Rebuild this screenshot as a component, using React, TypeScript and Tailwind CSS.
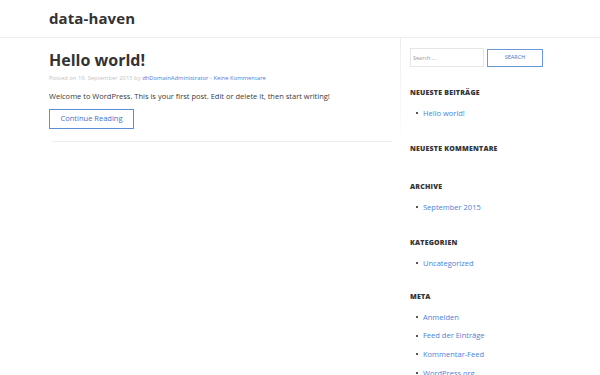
import React from "react";

const font = { fontFamily: '"Open Sans", "Liberation Sans", sans-serif' };

function Widget({ title, items, className }: { title: string; items: string[]; className: string }) {
  return (
    <section className={className}>
      <h2 className="text-[7px] leading-[10px] font-extrabold uppercase tracking-[0.2px] text-[#333]">{title}</h2>
      {items.length > 0 && (
        <ul className="mt-[5.5px]">
          {items.map((it) => (
            <li key={it} className="flex items-center leading-[18.6px] text-[7.5px]">
              <span className="ml-[6px] mr-[5px] w-[2px] h-[2px] bg-[#555]" />
              <a className="text-[#4a84d4]">{it}</a>
            </li>
          ))}
        </ul>
      )}
    </section>
  );
}

export default function App() {
  return (
    <div className="min-h-[375px] bg-white overflow-hidden" style={font}>
      {/* Header */}
      <header className="h-[38px] border-b border-[#eeeeee] flex items-center">
        <h1 className="ml-[49px] text-[15px] font-bold text-[#333] tracking-[0.1px]">data-haven</h1>
      </header>

      <div className="flex pl-[49px]">
        {/* Main */}
        <main className="w-[343px] pt-[10px]">
          <h2 className="text-[16px] leading-[24px] font-bold text-[#333]">Hello world!</h2>
          <p className="mt-[1px] text-[5.85px] leading-[10px] text-[#c4c4c4]">
            Posted on 19. September 2015 by <a className="text-[#4a84d4]">dhDomainAdministrator</a>
            <span className="text-[#4a84d4]"> - Keine Kommentare</span>
          </p>
          <p className="mt-[7px] text-[7.5px] leading-[12px] text-[#3a3a3a]">
            Welcome to WordPress. This is your first post. Edit or delete it, then start writing!
          </p>
          <button className="mt-[7px] w-[85px] h-[20px] border border-[#5d8fd6] text-[7.5px] text-[#3f74c4]">
            Continue Reading
          </button>
          <div className="mt-[12px] ml-[3px] h-px bg-[#ececec]" />
        </main>

        {/* divider */}
        <div className="ml-[8px] w-px h-[110px] bg-gradient-to-b from-[#ececec] to-transparent" />

        {/* Sidebar */}
        <aside className="pl-[9px] pt-[10px] w-[150px]">
          <form className="flex items-center gap-[3px]">
            <input
              placeholder="Search ..."
              className="w-[74px] h-[19px] border border-[#e6e6e6] px-[2px] text-[5.5px] text-[#999] placeholder:text-[#999] outline-none"
              style={font}
            />
            <button
              type="button"
              className="w-[56px] h-[18px] border border-[#6b98d8] text-[5.5px] text-[#3f74c4] uppercase"
            >
              Search
            </button>
          </form>
          <Widget className="mt-[21px] mb-[22px]" title="Neueste Beiträge" items={["Hello world!"]} />
          <Widget className="mb-[28px]" title="Neueste Kommentare" items={[]} />
          <Widget className="mb-[22px]" title="Archive" items={["September 2015"]} />
          <Widget className="mb-[20px]" title="Kategorien" items={["Uncategorized"]} />
          <Widget
            className=""
            title="Meta"
            items={["Anmelden", "Feed der Einträge", "Kommentar-Feed", "WordPress.org"]}
          />
        </aside>
      </div>
    </div>
  );
}
